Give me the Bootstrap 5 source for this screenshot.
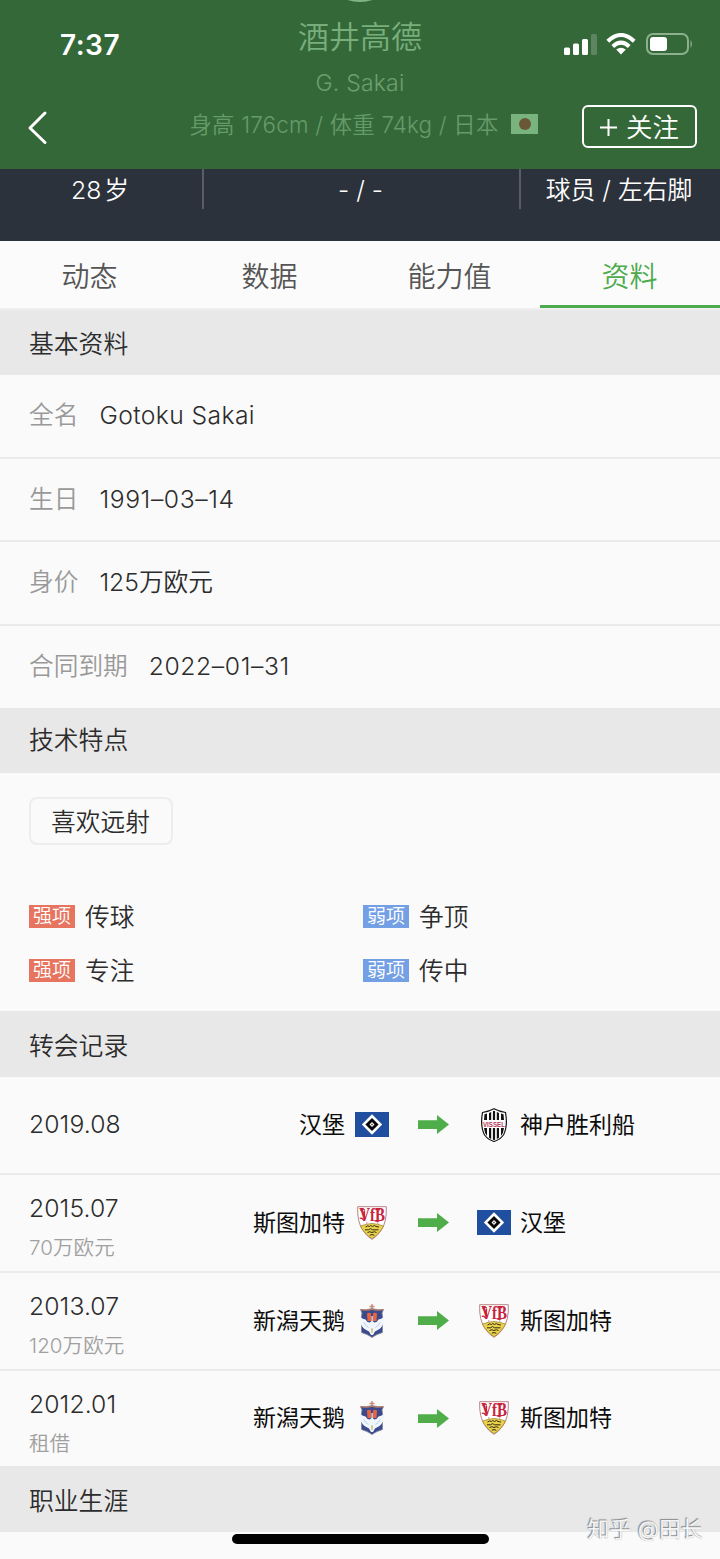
<!DOCTYPE html>
<html lang="zh-CN">
<head>
  <meta charset="UTF-8">
  <meta name="viewport" content="width=device-width, initial-scale=1">
  <title>酒井高德 - 资料</title>
  <link rel="stylesheet" href="https://cdn.jsdelivr.net/npm/bootstrap@5.3.0/dist/css/bootstrap.min.css">
  <style>
    body {
      background: #fafafa;
      color: #2c2c2c;
      font-family: Inter, "Noto Sans CJK SC", sans-serif;
      font-weight: 350;
      font-size: 24.7px;
      line-height: 1.2;
      height: 1559px;
      overflow: hidden;
    }
    svg { display: block; flex: none; }

    /* header */
    .player-head {
      height: 169px;
      background: #356839;
      display: grid;
      grid-template-columns: 178px 372px 1fr;
      overflow: hidden;
    }
    .avatar-edge {
      width: 80px; height: 80px;
      left: 320px; top: -78px;
      background: #7fb583;
    }
    .head-left { padding: 28px 0 0 27px; }
    .clock { font-weight: 600; font-size: 28px; padding-left: 33px; letter-spacing: .5px; height: 34px; line-height: 34px; }
    .back-icon { margin-top: 48px; }
    .head-mid { padding-top: 17px; color: #78ae7c; white-space: nowrap; }
    .player-name { font-size: 31px; line-height: 40px; margin-left: -8px; }
    .player-en { font-size: 23px; line-height: 28px; margin: 12px 0 0 -8px; letter-spacing: .2px; color: #6aa06e; }
    .player-meta { font-size: 22.4px; line-height: 28px; margin-top: 14px; color: #659b69; letter-spacing: .2px; }
    .flag { margin: -2px 0 0 13px; }
    .head-right { padding: 32px 23px 0 0; }
    .status-icons { padding-right: 4px; height: 24px; }
    .follow-btn {
      width: 115px; height: 43px; margin-top: 49px;
      border: 2px solid #fff; border-radius: 6px;
      color: #fff; font-size: 26.5px; line-height: 1; padding: 2px 0 0; font-weight: 350;
    }
    .follow-btn svg { margin: -1px 9px 0 0; }

    /* stats strip */
    .stat-strip { height: 72px; background: #2c323b; color: #fff; font-size: 24.8px; }
    .stat-strip > div { height: 40px; padding-top: 7px; text-align: center; white-space: nowrap; }
    .stat-strip > div + div { border-left: 2px solid #595d64; }
    .stat-age { width: 202px; word-spacing: -4px; padding-right: 2px; }
    .stat-num { width: 317px; padding-right: 2px; }
    .stat-foot { padding-right: 3px; }

    /* tabs */
    .tab-row { height: 69px; border-bottom: 2px solid #efefef; background: #fbfbfb; }
    .tab-row .nav-link {
      height: 67px; padding: 0 1px 0 0; border-radius: 0;
      font-size: 28px; line-height: 72px; color: #555;
      border-bottom: 3px solid transparent;
    }
    .tab-row .nav-link.active { color: #4bab4d; border-color: #4bab4d; }

    .sec-title { background: #e8e8e8; padding: 0 29px; height: 65px; line-height: 68px; font-size: 24.8px; }
    .sec-title.tight { line-height: 65px; }
    .sec-title.tall { height: 66px; line-height: 70px; }

    .info-item { height: 83.6px; padding: 0 29px; border-bottom: 2px solid #eaeaea; }
    .info-item:last-child { border-bottom: 0; height: 82px; }
    .info-label { color: #999; margin-right: 21px; }
    .info-value { letter-spacing: .4px; }
    .info-value.num { letter-spacing: .6px; }

    /* traits */
    .traits { height: 238px; padding: 24px 29px 0; }
    .trait-chip { width: 144px; height: 48px; border: 2px solid #ededed; border-radius: 8px; line-height: 47px; text-align: center; margin-bottom: 46px; padding-right: 1px; }
    .trait-item { height: 54px; }
    .trait-item > div { width: 334px; flex: none; }
    .tag { width: 46px; height: 23px; line-height: 23px; font-size: 19px; color: #fff; text-align: center; margin: -2px 10px 0 0; }
    .tag-strong { background: #e6745f; }
    .tag-weak { background: #739fe4; }

    /* transfers */
    .transfer { height: 98px; border-bottom: 2px solid #eaeaea; padding-left: 29px; }
    .transfer:last-child { border-bottom: 0; height: 95px; }
    .transfer-date { width: 155px; flex: none; letter-spacing: .1px; }
    .has-fee { padding-top: 9px; }
    .fee { font-size: 20.5px; color: #a0a0a0; line-height: 24px; margin-top: 12px; }
    .club { font-size: 23px; color: #0c0c0c; font-weight: 370; white-space: nowrap; padding-top: 2px; }
    .club-from { width: 161px; flex: none; text-align: right; margin-right: 10px; }
    .club-to { margin-left: 9px; }
    .crest { width: 34px; display: flex; justify-content: center; }
    .arrow { margin: 0 28px 0 29px; }

    .home-bar { left: 232px; top: 1534px; width: 257px; height: 10px; background: #000; }
    .watermark { right: 17px; top: 1516px; font-size: 22px; font-weight: 400; color: #f5f5f5; text-shadow: -1px -1px 1px #888, 0 0 1px #aaa; }
  </style>
</head>
<body>

  <!-- club crests -->
  <svg class="d-none">
    <symbol id="hsv" viewBox="0 0 34 25">
      <rect width="34" height="25" fill="#214f9f"/>
      <path d="M17 2.300 27.200 12.500 17 22.700 6.800 12.500Z" fill="#fff"/>
      <path d="M17 5.900 23.600 12.500 17 19.100 10.400 12.500Z" fill="#080808"/>
      <path d="M17 10 19.500 12.500 17 15 14.500 12.500Z" fill="#fff"/>
      <path d="M17 11.600 17.900 12.500 17 13.400 16.100 12.500Z" fill="#222"/>
    </symbol>
    <symbol id="vissel" viewBox="0 0 26 34">
      <path d="M1.500 4.500Q8 3.500 13 .8Q18 3.500 24.500 4.500Q27 18 22.500 27Q18.500 32 13 33.500Q7.500 32 3.500 27Q-1 18 1.500 4.500Z" fill="#fff" stroke="#151515" stroke-width="1.200"/>
      <path d="M3.500 6.200 6 5.600V12H3zM8 5 10.200 4V12H8zM11.900 3.300 13 2.700 14.100 3.300V12H11.900zM15.800 4 18 5V12H15.800zM20 5.600 22.500 6.200 23 12H20z" fill="#111"/>
      <path d="M3 20H6V28Q3.500 25 3 20zM8 20H10.200V31L8 29.700zM11.900 20H14.100V31.700L13 32.100 11.900 31.700zM15.800 20H18V29.700L15.800 31zM20 20H23Q22.500 25 20 28z" fill="#111"/>
      <text x="2" y="18.600" font-family="Liberation Sans" font-size="6.800" font-weight="700" fill="#b23a5c" textLength="22" lengthAdjust="spacingAndGlyphs">VISSEL</text>
    </symbol>
    <symbol id="vfb" viewBox="0 0 30 34">
      <path d="M.7.7H29.300Q30 16 24 24.500Q20 30.500 15 33.400Q10 30.500 6 24.500Q0 16 .7.700Z" fill="#fff" stroke="#b98283" stroke-width="1"/>
      <path d="M3.500 20Q9 18 15 17.500Q21 18 26.500 20Q25 23.500 22.500 26Q19 30.500 15 32.600Q11 30.500 7.500 26Q5 23.500 3.500 20Z" fill="#ead24b" stroke="#a08435" stroke-width=".8"/>
      <g fill="none" stroke="#302a18" stroke-width="1">
        <path d="M8.500 21q2.500-2 4-.5q1-2 3 0q2-2 3.500 0l3 .5"/>
        <path d="M8 23.800h3.500l2-1.200 2 1.200h6"/><path d="M10.500 26.500q2.500-1.500 4.500 0q2.500-1.500 4.500 0"/>
        <path d="M12.800 29.200q2.200-1.200 4.500 0"/>
      </g>
      <path d="M3.200 4.500q2-2.500 4.500-.8M2.800 12.500q2-1.500 4.500 2.500M18.500 4q2.500-2 4.500 0M17.500 14.500q3 1.800 5 0M7.500 4.500v9" fill="none" stroke="#c8233c" stroke-width="1.200"/>
      <text transform="scale(1 1.200)" x="2.200" y="12.400" font-family="Liberation Serif" font-size="16.500" font-weight="700" fill="#c8233c" textLength="25.800" lengthAdjust="spacingAndGlyphs">VfB</text>
      <path d="M9 17h1.500M20 17h1.500" stroke="#d56a74" stroke-width="1"/>
    </symbol>
    <symbol id="albirex" viewBox="0 0 26 34">
      <path d="M13 0v7M10.500 2.500h5" stroke="#c98a70" stroke-width="1.400"/>
      <path d="M1.500 5.500Q7 6.500 13 4.500Q19 6.500 24.500 5.500L23 9Q24 13 23.500 17V28.500Q18 30 13 33.500Q8 30 2.500 28.500V17Q2 13 3 9Z" fill="#3b4a8c" stroke="#82859b" stroke-width=".8"/>
      <path d="M1.500 5.500Q8 7 13 5.300Q18 7 24.500 5.500" fill="none" stroke="#c67c5d" stroke-width="1.200"/>
      <path d="M8 9.500Q10 7.800 12 9.500V17H8.500zM14 9.500Q16 7.800 18 9.500L17.500 17H14z" fill="#e66540"/>
      <path d="M1 13Q4 15 6.500 15.500Q7.500 18 10.800 18.500L12.500 17V12H13.700V17L15.200 18.500Q18.500 18 19.500 15.500Q22 15 25 13Q25.500 21 20.500 25L16 27.500L14 31H12L10 27.500L5.500 25Q.5 21 1 13Z" fill="#f0f6fb"/>
      <path d="M5 18.500q1.500 3.500 4.500 5M21 18.500q-1.500 3.500-4.500 5" fill="none" stroke="#b9cfe5" stroke-width="1"/>
      <path d="M12 24.500h2l-.5 4.500h-1z" fill="#d3bd74"/>
    </symbol>
    <symbol id="arrow" viewBox="0 0 31 19">
      <path d="M0 5.200H19V0L31 9.500 19 19V14H0Z" fill="#4fae49"/>
    </symbol>
  </svg>

  <header class="player-head position-relative">
    <div class="avatar-edge position-absolute rounded-circle"></div>
    <div class="head-left text-white">
      <div class="clock">7:37</div>
      <svg class="back-icon" width="22" height="36" viewBox="0 0 22 36" fill="none" stroke="#fff" stroke-width="3" stroke-linecap="round" stroke-linejoin="round"><path d="M18 3 3 18 18 32.500"/></svg>
    </div>
    <div class="head-mid d-flex flex-column align-items-center">
      <div class="player-name">酒井高德</div>
      <div class="player-en">G. Sakai</div>
      <div class="player-meta d-flex align-items-center">
        <span>身高 176cm / 体重 74kg / 日本</span>
        <svg class="flag" width="27" height="20" viewBox="0 0 27 20"><rect width="27" height="20" fill="#79b47e"/><circle cx="14" cy="10" r="6" fill="#6a5737"/></svg>
      </div>
    </div>
    <div class="head-right d-flex flex-column align-items-end">
      <div class="status-icons d-flex align-items-center">
        <svg width="33" height="21" viewBox="0 0 33 21" fill="#fff"><rect y="13.500" width="6" height="7.500" rx="1.500"/><rect x="9" y="9.500" width="6" height="11.500" rx="1.500"/><rect x="18" y="5" width="6" height="16" rx="1.500"/><rect x="27" width="6" height="21" rx="1.500" opacity=".2"/></svg>
        <svg style="margin: 0 10px 0 9px" width="30" height="22" viewBox="0 0 30 22" fill="none" stroke="#fff" stroke-width="4"><path d="M1.800 8.200Q15-4.200 28.200 8.200"/><path d="M6.800 13.400Q15 6 23.200 13.400"/><path d="M15 21.500 10.200 16.600Q15 12.700 19.800 16.600Z" fill="#fff" stroke="none"/></svg>
        <svg width="47" height="22" viewBox="0 0 47 22"><rect x="1" y="1" width="41" height="20" rx="6" fill="none" stroke="#8caf8e" stroke-width="2"/><rect x="4" y="4" width="17" height="14" rx="3" fill="#fff"/><path d="M44.500 7q3 4 0 8z" fill="#8caf8e"/></svg>
      </div>
      <button class="btn follow-btn d-flex align-items-center justify-content-center">
        <svg width="17" height="17" viewBox="0 0 17 17" stroke="#fff" stroke-width="2"><path d="M8.500 0v17M0 8.500h17"/></svg>关注
      </button>
    </div>
  </header>

  <div class="stat-strip d-flex">
    <div class="stat-age">28 岁</div>
    <div class="stat-num">- / -</div>
    <div class="stat-foot flex-fill">球员 / 左右脚</div>
  </div>

  <nav class="tab-row nav nav-justified">
    <a class="nav-link" href="#">动态</a>
    <a class="nav-link" href="#">数据</a>
    <a class="nav-link" href="#">能力值</a>
    <a class="nav-link active" href="#">资料</a>
  </nav>

  <div class="sec-title">基本资料</div>
  <section>
    <div class="info-item d-flex align-items-center"><span class="info-label">全名</span><span class="info-value">Gotoku Sakai</span></div>
    <div class="info-item d-flex align-items-center"><span class="info-label">生日</span><span class="info-value num">1991–03–14</span></div>
    <div class="info-item d-flex align-items-center"><span class="info-label">身价</span><span class="info-value" style="letter-spacing: 0">125万欧元</span></div>
    <div class="info-item d-flex align-items-center"><span class="info-label">合同到期</span><span class="info-value num">2022–01–31</span></div>
  </section>

  <div class="sec-title tight">技术特点</div>
  <section class="traits">
    <div class="trait-chip">喜欢远射</div>
    <div class="trait-item d-flex align-items-center">
      <div class="d-flex align-items-center"><span class="tag tag-strong">强项</span>传球</div>
      <div class="d-flex align-items-center"><span class="tag tag-weak">弱项</span>争顶</div>
    </div>
    <div class="trait-item d-flex align-items-center">
      <div class="d-flex align-items-center"><span class="tag tag-strong">强项</span>专注</div>
      <div class="d-flex align-items-center"><span class="tag tag-weak">弱项</span>传中</div>
    </div>
  </section>

  <div class="sec-title tall">转会记录</div>
  <section>
    <div class="transfer d-flex align-items-center">
      <div class="transfer-date">2019.08</div>
      <div class="club club-from">汉堡</div>
      <div class="crest"><svg width="34" height="25"><use href="#hsv"/></svg></div>
      <svg class="arrow" width="31" height="19"><use href="#arrow"/></svg>
      <div class="crest"><svg width="26" height="34"><use href="#vissel"/></svg></div>
      <div class="club club-to">神户胜利船</div>
    </div>
    <div class="transfer d-flex align-items-center">
      <div class="transfer-date has-fee">2015.07<div class="fee">70万欧元</div></div>
      <div class="club club-from">斯图加特</div>
      <div class="crest"><svg width="30" height="34"><use href="#vfb"/></svg></div>
      <svg class="arrow" width="31" height="19"><use href="#arrow"/></svg>
      <div class="crest"><svg width="34" height="25"><use href="#hsv"/></svg></div>
      <div class="club club-to">汉堡</div>
    </div>
    <div class="transfer d-flex align-items-center">
      <div class="transfer-date has-fee">2013.07<div class="fee">120万欧元</div></div>
      <div class="club club-from">新潟天鹅</div>
      <div class="crest"><svg width="26" height="34"><use href="#albirex"/></svg></div>
      <svg class="arrow" width="31" height="19"><use href="#arrow"/></svg>
      <div class="crest"><svg width="30" height="34"><use href="#vfb"/></svg></div>
      <div class="club club-to">斯图加特</div>
    </div>
    <div class="transfer d-flex align-items-center">
      <div class="transfer-date has-fee">2012.01<div class="fee">租借</div></div>
      <div class="club club-from">新潟天鹅</div>
      <div class="crest"><svg width="26" height="34"><use href="#albirex"/></svg></div>
      <svg class="arrow" width="31" height="19"><use href="#arrow"/></svg>
      <div class="crest"><svg width="30" height="34"><use href="#vfb"/></svg></div>
      <div class="club club-to">斯图加特</div>
    </div>
  </section>

  <div class="sec-title tall">职业生涯</div>

  <div class="home-bar position-absolute rounded-pill"></div>
  <div class="watermark position-absolute">知乎 @田长</div>

  <script src="https://cdn.jsdelivr.net/npm/bootstrap@5.3.0/dist/js/bootstrap.bundle.min.js"></script>
</body>
</html>
